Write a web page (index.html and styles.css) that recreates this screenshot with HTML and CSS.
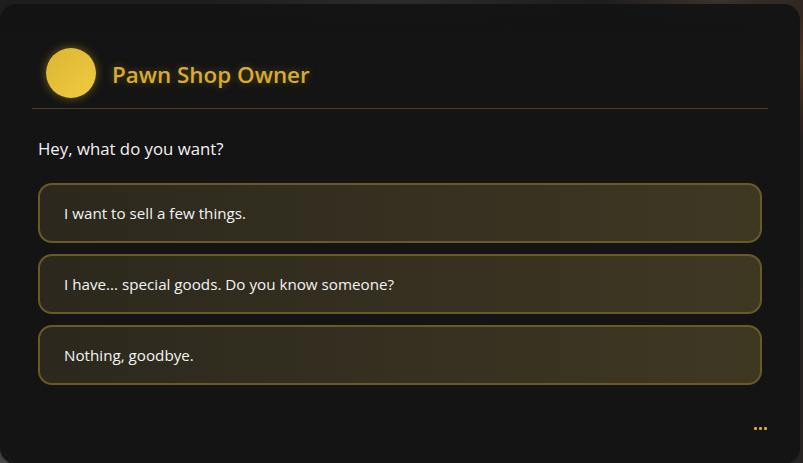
FILE: index.html
```html
<!DOCTYPE html>
<html lang="en">
<head>
<meta charset="utf-8">
<title>Pawn Shop Owner</title>
<link rel="stylesheet" href="styles.css">
</head>
<body>
<div class="scene">
  <section class="dialog">
    <header class="dialog-header">
      <div class="avatar"></div>
      <h1 class="npc-name">Pawn Shop Owner</h1>
    </header>
    <div class="dialog-body">
      <p class="npc-line">Hey, what do you want?</p>
      <ul class="choices">
        <li class="choice">I want to sell a few things.</li>
        <li class="choice">I have... special goods. Do you know someone?</li>
        <li class="choice">Nothing, goodbye.</li>
      </ul>
    </div>
    <footer class="dialog-footer">
      <span class="dot"></span><span class="dot"></span><span class="dot"></span>
    </footer>
  </section>
</div>
</body>
</html>
```

FILE: styles.css
```css
* { box-sizing: border-box; }
html, body { margin: 0; padding: 0; }
body {
  width: 803px;
  height: 463px;
  overflow: hidden;
  font-family: "Open Sans", "Noto Sans", "Liberation Sans", sans-serif;
  background:
    radial-gradient(ellipse 60px 80px at 803px 60px, #4a3426 0%, rgba(74,52,38,0) 100%),
    radial-gradient(ellipse 120px 20px at 720px 0px, #3a342e 0%, rgba(58,52,46,0) 100%),
    radial-gradient(ellipse 200px 20px at 400px 0px, #2e2c2c 0%, rgba(46,44,44,0) 100%),
    radial-gradient(ellipse 30px 30px at 0px 463px, #4a4848 0%, rgba(74,72,72,0) 100%),
    linear-gradient(180deg, #1e1c1c 0%, #262322 100%);
}
.scene {
  padding: 4px 3px 0 0;
}
.dialog {
  width: 800px;
  height: 460px;
  background: rgba(20, 20, 20, 0.97);
  border-radius: 16px;
  padding: 32px 32px 0 32px;
  display: flex;
  flex-direction: column;
}
.dialog-header {
  display: flex;
  align-items: center;
  gap: 16px;
  padding: 12px 14px 10px 14px;
  border-bottom: 1px solid #4a3d1b;
}
.avatar {
  width: 50px;
  height: 50px;
  border-radius: 50%;
  background: linear-gradient(135deg, #dcb434 0%, #f0cc40 100%);
  box-shadow: 0 0 10px rgba(230, 190, 50, 0.45);
  flex: none;
}
.npc-name {
  margin: 0;
  padding-top: 3px;
  font-size: 22.4px;
  font-weight: 600;
  color: #d8ac30;
  text-shadow: 0 0 8px rgba(216, 172, 48, 0.35);
}
.dialog-body {
  padding: 0 6px;
}
.npc-line {
  margin: 28px 0 22px 0;
  font-size: 16.8px;
  line-height: 24px;
  color: #f2f2f2;
}
.choices {
  list-style: none;
  margin: 0;
  padding: 0;
  display: flex;
  flex-direction: column;
  gap: 11px;
}
.choice {
  height: 60px;
  display: flex;
  align-items: center;
  padding: 0 24px;
  border: 2px solid #6b5926;
  border-radius: 14px;
  background: linear-gradient(90deg, #2c281d 0%, #3e3823 100%);
  color: #f4f4f4;
  font-size: 15.2px;
}
.dialog-footer {
  display: flex;
  justify-content: flex-end;
  gap: 2px;
  margin-top: 42px;
  padding-right: 1px;
}
.dot {
  width: 3px;
  height: 3px;
  background: #d9aa2a;
  border-radius: 1px;
}
```
